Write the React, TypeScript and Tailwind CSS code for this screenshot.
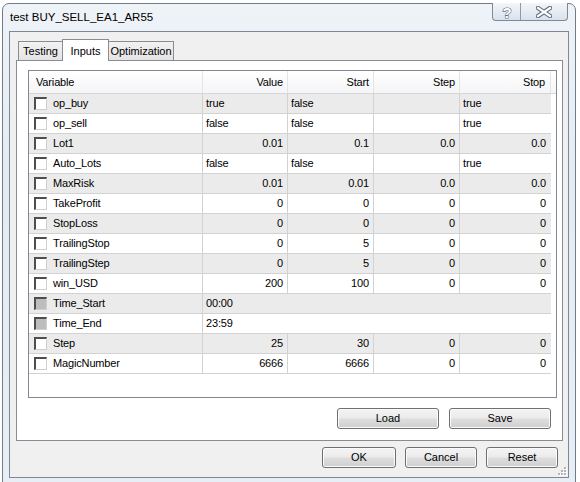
import React from "react";

type Row = {
  name: string;
  value: string;
  start: string;
  step: string;
  stop: string;
  text?: boolean;
  time?: boolean;
};

const ROWS: Row[] = [
  { name: "op_buy", value: "true", start: "false", step: "", stop: "true", text: true },
  { name: "op_sell", value: "false", start: "false", step: "", stop: "true", text: true },
  { name: "Lot1", value: "0.01", start: "0.1", step: "0.0", stop: "0.0" },
  { name: "Auto_Lots", value: "false", start: "false", step: "", stop: "true", text: true },
  { name: "MaxRisk", value: "0.01", start: "0.01", step: "0.0", stop: "0.0" },
  { name: "TakeProfit", value: "0", start: "0", step: "0", stop: "0" },
  { name: "StopLoss", value: "0", start: "0", step: "0", stop: "0" },
  { name: "TrailingStop", value: "0", start: "5", step: "0", stop: "0" },
  { name: "TrailingStep", value: "0", start: "5", step: "0", stop: "0" },
  { name: "win_USD", value: "200", start: "100", step: "0", stop: "0" },
  { name: "Time_Start", value: "00:00", start: "", step: "", stop: "", time: true },
  { name: "Time_End", value: "23:59", start: "", step: "", stop: "", time: true },
  { name: "Step", value: "25", start: "30", step: "0", stop: "0" },
  { name: "MagicNumber", value: "6666", start: "6666", step: "0", stop: "0" },
];

const BTN =
  "h-[21px] rounded-[3px] border border-[#707070] bg-[linear-gradient(180deg,#f4f4f4_0%,#ebebeb_48%,#dedede_52%,#cfcfcf_100%)] shadow-[inset_0_0_0_1px_#fafafa] text-[11px] text-black flex items-center justify-center";

function CheckBox({ disabled }: { disabled?: boolean }) {
  return (
    <span
      className={`shrink-0 w-[13px] h-[13px] border-t-2 border-l-2 border-r border-b border-t-[#4e4e4e] border-l-[#4e4e4e] border-r-[#cfcfcf] border-b-[#cfcfcf] ${
        disabled ? "bg-[#bdbdbd]" : "bg-white"
      }`}
    />
  );
}

function GridRow({ row, odd }: { row: Row; odd: boolean }) {
  const bg = odd ? "bg-[#ebebeb]" : "bg-white";
  const align = row.text ? "justify-start pl-[3px]" : "justify-end pr-[4px]";
  return (
    <div className={`flex w-[522px] h-[20px] border-b border-[#d2d2d2] ${bg}`}>
      <div className="w-[174px] flex items-center pl-[5px] gap-[6px] border-r border-[#d2d2d2]">
        <CheckBox disabled={row.time} />
        <span>{row.name}</span>
      </div>
      {row.time ? (
        <>
          <div className="w-[85px] flex items-center pl-[3px]">{row.value}</div>
          <div className="flex-1" />
        </>
      ) : (
        <>
          <div className={`w-[85px] flex items-center border-r border-[#d2d2d2] ${align}`}>{row.value}</div>
          <div className={`w-[86px] flex items-center border-r border-[#d2d2d2] ${align}`}>{row.start}</div>
          <div className={`w-[86px] flex items-center border-r border-[#d2d2d2] ${align}`}>{row.step}</div>
          <div className={`w-[91px] flex items-center ${row.text ? "justify-start pl-[3px]" : "justify-end pr-[5px]"}`}>
            {row.stop}
          </div>
        </>
      )}
    </div>
  );
}

function CaptionButtons() {
  return (
    <div className="absolute right-[7px] -top-px flex h-[18px] rounded-b-[4px] border border-t-0 border-[#7d8997] overflow-hidden bg-[linear-gradient(180deg,#f3f6fa_0%,#e6ecf3_50%,#d9e2ec_100%)]">
      <div className="w-[28px] flex items-center justify-center border-r border-[#8f9aa7]">
        <svg width="16" height="18" viewBox="0 0 16 18">
          <text
            x="8"
            y="15"
            textAnchor="middle"
            fontSize="15"
            fontWeight="bold"
            fontFamily="Liberation Sans, Arial, sans-serif"
            fill="#ffffff"
            stroke="#5f6b78"
            strokeWidth="1.2"
            paintOrder="stroke"
          >
            ?
          </text>
        </svg>
      </div>
      <div className="w-[46px] flex items-center justify-center">
        <svg width="16" height="12" viewBox="0 0 16 12">
          <path
            d="M2 2 L14 10 M14 2 L2 10"
            stroke="#5f6b78"
            strokeWidth="4.5"
            strokeLinecap="square"
            fill="none"
          />
          <path
            d="M2 2 L14 10 M14 2 L2 10"
            stroke="#ffffff"
            strokeWidth="2.2"
            strokeLinecap="square"
            fill="none"
          />
        </svg>
      </div>
    </div>
  );
}

export default function App() {
  return (
    <div className="relative w-[580px] h-[482px] overflow-hidden bg-white font-['Liberation_Sans',Arial,sans-serif] text-[11px] text-black">
      <div className="ml-[2px] mt-[3px] w-[574px] h-[484px] rounded-t-[7px] border border-[#6f7c8b] bg-[linear-gradient(180deg,#eef3f8_0%,#e4ebf3_35%,#e8eef5_100%)]">
        <div className="relative h-[27px] flex items-center pl-[7px]">
          <span className="text-[11.5px]">test BUY_SELL_EA1_AR55</span>
          <CaptionButtons />
        </div>

        <div className="relative ml-[6px] w-[560px] h-[447px] border border-[#7f8893] bg-[#f0f0f0]">
          <div className="flex items-end h-[28px] pt-[7px] ml-[6px] pl-[2px]">
            <div className="w-[45px] h-[19px] border border-b-0 border-[#898c95] bg-[linear-gradient(180deg,#f2f2f2,#e4e4e4)] flex items-center justify-center">
              Testing
            </div>
            <div className="relative z-10 -ml-px -mb-px w-[47px] h-[22px] border border-b-0 border-[#898c95] bg-white flex items-start justify-center pt-[3px]">
              Inputs
            </div>
            <div className="-ml-px w-[66px] h-[19px] border border-b-0 border-[#898c95] bg-[linear-gradient(180deg,#f2f2f2,#e4e4e4)] flex items-center justify-center">
              Optimization
            </div>
          </div>

          <div className="ml-[6px] w-[547px] h-[381px] border border-[#898c95] bg-white">
            <div className="mt-[9px] ml-[11px] w-[529px] h-[328px] border border-[#828790] bg-white overflow-hidden tracking-[-0.15px]">
              <div className="flex h-[23px] border-b border-[#d5d5d5] bg-[linear-gradient(180deg,#ffffff,#f4f5f7)]">
                <div className="w-[174px] flex items-center pl-[7px] border-r border-[#e3e4e6]">Variable</div>
                <div className="w-[85px] flex items-center justify-end pr-[4px] border-r border-[#e3e4e6]">Value</div>
                <div className="w-[86px] flex items-center justify-end pr-[4px] border-r border-[#e3e4e6]">Start</div>
                <div className="w-[86px] flex items-center justify-end pr-[4px] border-r border-[#e3e4e6]">Step</div>
                <div className="w-[91px] flex items-center justify-end pr-[5px] border-r border-[#e3e4e6]">Stop</div>
                <div className="flex-1" />
              </div>
              {ROWS.map((row, i) => (
                <GridRow key={row.name} row={row} odd={i % 2 === 0} />
              ))}
            </div>

            <div className="mt-[10px] mr-[11px] flex justify-end gap-[10px]">
              <button className={`${BTN} w-[102px]`}>Load</button>
              <button className={`${BTN} w-[102px]`}>Save</button>
            </div>
          </div>

          <div className="mt-[6px] mr-[10px] flex justify-end gap-[9px]">
            <button className={`${BTN} w-[74px]`}>OK</button>
            <button className={`${BTN} w-[72px]`}>Cancel</button>
            <button className={`${BTN} w-[72px]`}>Reset</button>
          </div>

          <svg className="absolute right-px bottom-px" width="10" height="10" viewBox="0 0 10 10">
            {[
              [7, 1],
              [4, 4],
              [7, 4],
              [1, 7],
              [4, 7],
              [7, 7],
            ].map(([x, y]) => (
              <g key={`${x}-${y}`}>
                <rect x={x + 1} y={y + 1} width="2" height="2" fill="#ffffff" />
                <rect x={x} y={y} width="2" height="2" fill="#b4b4b4" />
              </g>
            ))}
          </svg>
        </div>
      </div>
    </div>
  );
}
